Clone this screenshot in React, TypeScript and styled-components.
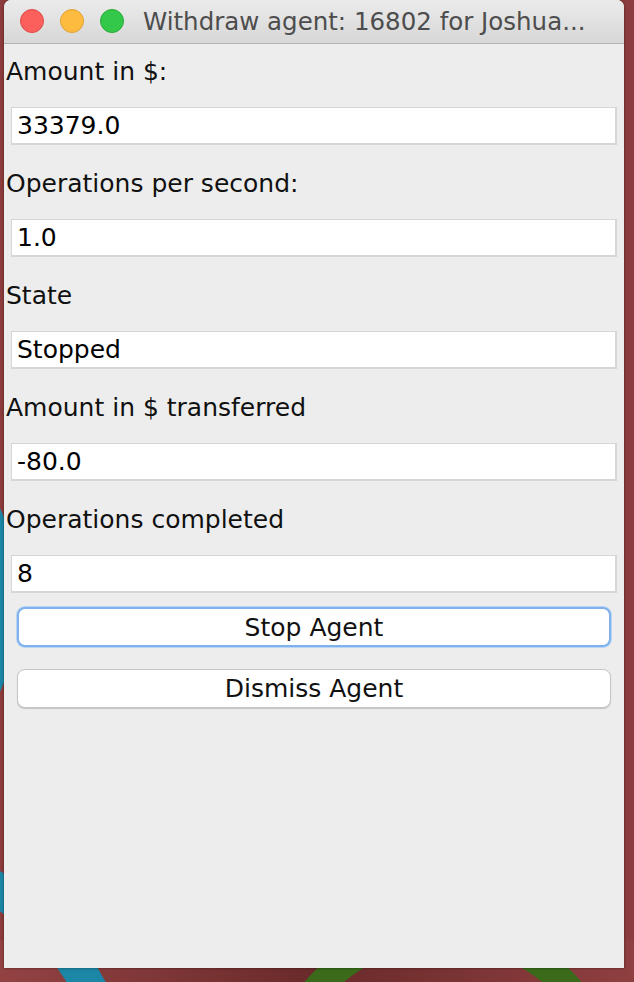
import React from "react";
import styled, { createGlobalStyle } from "styled-components";

const GlobalStyle = createGlobalStyle`
  html, body {
    margin: 0;
    padding: 0;
    width: 634px;
    height: 982px;
    overflow: hidden;
    background: #7a3333;
  }
  * { box-sizing: border-box; }
`;

const Desktop = styled.div`
  position: relative;
  width: 634px;
  height: 982px;
  overflow: hidden;
  padding-left: 4px;
  font-family: "DejaVu Sans", "Liberation Sans", sans-serif;
`;

const Wallpaper = styled.svg`
  position: absolute;
  left: 0;
  top: 0;
  z-index: 0;
`;

const Window = styled.div`
  position: relative;
  z-index: 1;
  width: 620px;
  height: 968px;
  background: #ededed;
  border-radius: 7px 7px 0 0;
  box-shadow: 0 0 3px rgba(0, 0, 0, 0.45);
  display: flex;
  flex-direction: column;
  overflow: hidden;
`;

const TitleBar = styled.div`
  height: 44px;
  flex: none;
  display: flex;
  align-items: center;
  padding-left: 16px;
  padding-bottom: 1px;
  background: linear-gradient(#ebebeb, #d7d7d7);
  border-bottom: 1px solid #b3b3b3;
`;

const Lights = styled.div`
  display: flex;
  gap: 16px;
`;

const Light = styled.span<{ $fill: string; $edge: string }>`
  width: 24px;
  height: 24px;
  border-radius: 50%;
  background: ${(p) => p.$fill};
  border: 1px solid ${(p) => p.$edge};
`;

const Title = styled.div`
  margin-left: 19px;
  font-size: 24.5px;
  color: #4d4d4d;
  white-space: nowrap;
`;

const Content = styled.div`
  display: flex;
  flex-direction: column;
  padding-top: 13px;
`;

const Group = styled.div`
  display: flex;
  flex-direction: column;
  & + & {
    margin-top: 24px;
  }
`;

const Label = styled.div`
  padding-left: 2px;
  font-size: 25px;
  line-height: 30px;
  color: #111;
  margin-bottom: 20px;
`;

const Field = styled.div`
  margin: 0 7px;
  height: 38px;
  background: #fff;
  border: 2px solid #d6d6d6;
  border-top-width: 1px;
  border-left-width: 1px;
  padding-left: 5px;
  display: flex;
  align-items: center;
  font-size: 25px;
  color: #000;
`;

const Button = styled.div<{ $focused?: boolean; $top: number; $h: number }>`
  margin: ${(p) => p.$top}px 13px 0;
  height: ${(p) => p.$h}px;
  background: #fff;
  border-radius: 8px;
  display: flex;
  align-items: center;
  justify-content: center;
  font-size: 25px;
  color: #111;
  border: ${(p) => (p.$focused ? "2px solid #7fb2ec" : "1px solid #c6c6c6")};
  box-shadow: ${(p) =>
    p.$focused ? "0 0 0 1px #b9d4f4" : "0 1px 1px rgba(0,0,0,0.18)"};
`;

const fields = [
  { label: "Amount in $:", value: "33379.0" },
  { label: "Operations per second:", value: "1.0" },
  { label: "State", value: "Stopped" },
  { label: "Amount in $ transferred", value: "-80.0" },
  { label: "Operations completed", value: "8" },
];

export default function App() {
  return (
    <>
      <GlobalStyle />
      <Desktop>
        <Wallpaper width="634" height="982" viewBox="0 0 634 982">
          <defs>
            <linearGradient id="wp" x1="0" y1="0" x2="1" y2="0">
              <stop offset="0" stopColor="#934242" />
              <stop offset="0.5" stopColor="#6a2a2a" />
              <stop offset="1" stopColor="#8f3f3f" />
            </linearGradient>
          </defs>
          <rect x="0" y="0" width="634" height="982" fill="#8c3c3c" />
          <rect x="0" y="940" width="634" height="42" fill="url(#wp)" />
          <circle cx="-140" cy="1110" r="260" fill="none" stroke="#1b86a6" strokeWidth="34" />
          <circle cx="-200" cy="600" r="205" fill="none" stroke="#1b86a6" strokeWidth="30" />
          <circle cx="443" cy="1100" r="168" fill="none" stroke="#3a6a1a" strokeWidth="28" />
        </Wallpaper>
        <Window>
          <TitleBar>
            <Lights>
              <Light $fill="#fc605c" $edge="#de4a46" />
              <Light $fill="#fdbc40" $edge="#dea236" />
              <Light $fill="#34c84a" $edge="#27aa35" />
            </Lights>
            <Title>Withdraw agent: 16802 for Joshua...</Title>
          </TitleBar>
          <Content>
            {fields.map((f) => (
              <Group key={f.label}>
                <Label>{f.label}</Label>
                <Field>{f.value}</Field>
              </Group>
            ))}
            <Button $focused $top={14} $h={40}>
              Stop Agent
            </Button>
            <Button $top={22} $h={39}>
              Dismiss Agent
            </Button>
          </Content>
        </Window>
      </Desktop>
    </>
  );
}
